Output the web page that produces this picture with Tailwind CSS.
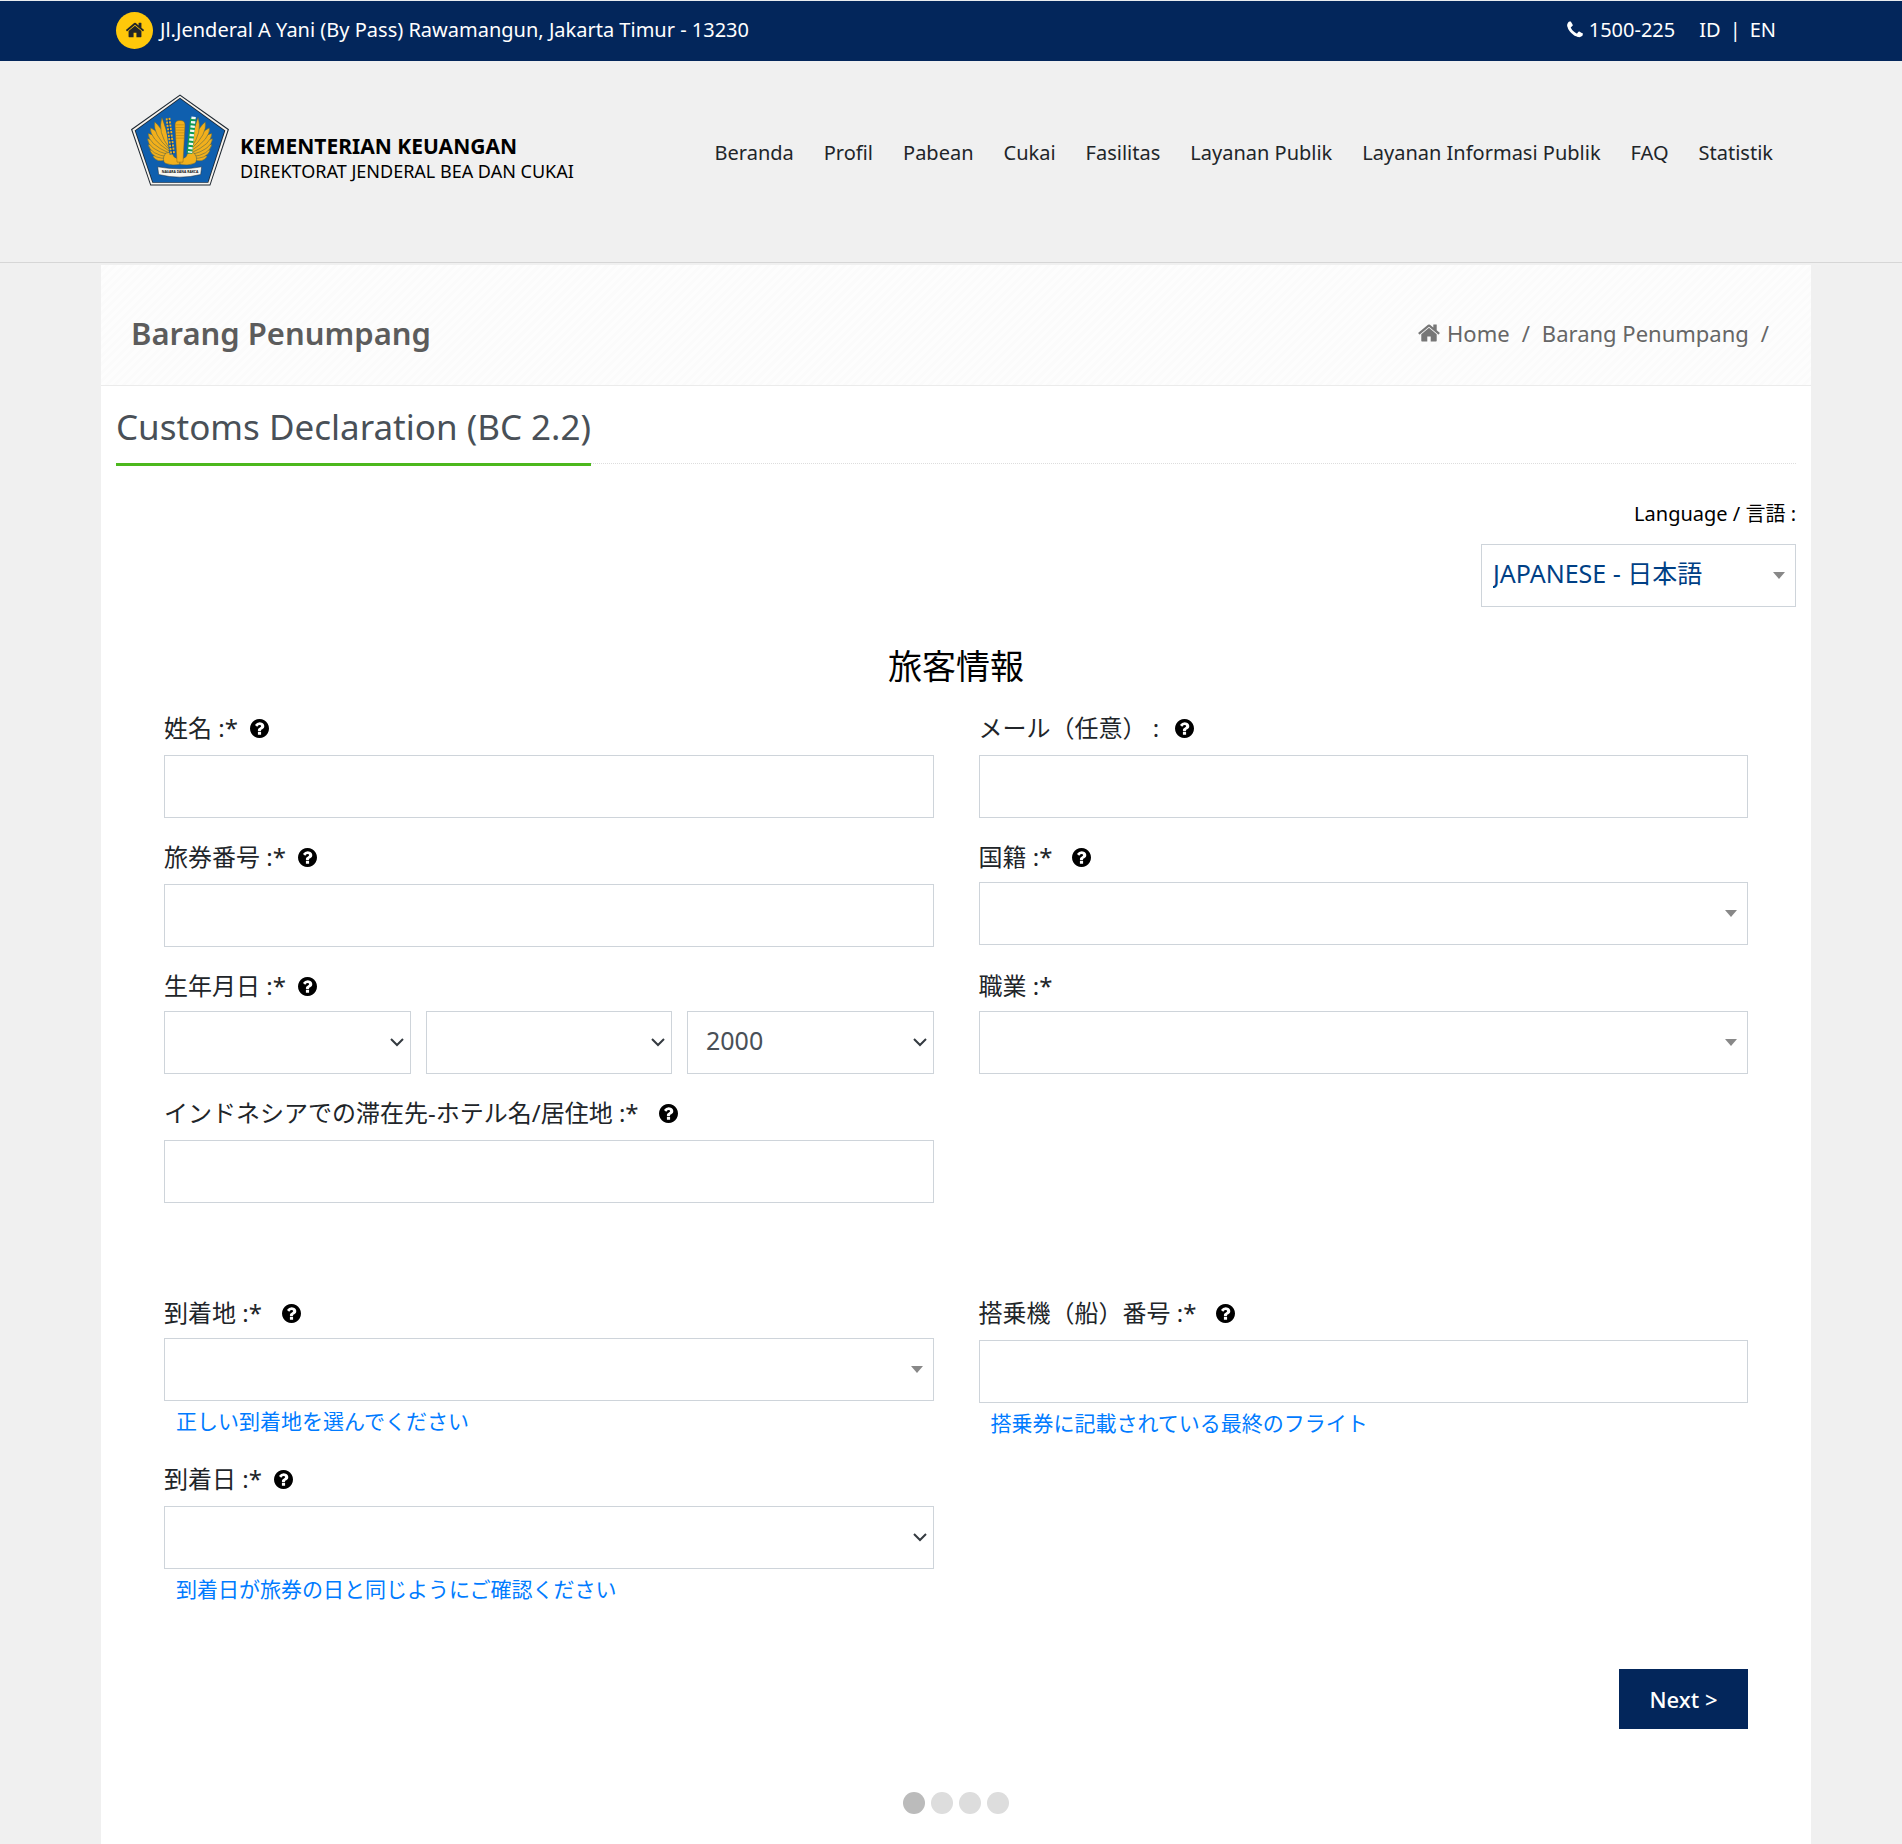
<!DOCTYPE html>
<html lang="ja">
<head>
  <meta charset="UTF-8">
  <meta name="viewport" content="width=device-width, initial-scale=1.0">
  <title>Customs Declaration (BC 2.2)</title>
  <script src="https://cdn.jsdelivr.net/npm/@tailwindcss/browser@4"></script>
</head>
<body class="bg-[#f0f0f0] font-['Noto_Sans','Noto_Sans_CJK_JP',sans-serif] text-[#212529]">

<!-- shared icons -->
<svg class="hidden">
  <symbol id="home" viewBox="0 0 1792 1792"><path d="M1472 992v480q0 26-19 45t-45 19h-384v-384h-256v384h-384q-26 0-45-19t-19-45v-480q0-1 .5-3t.5-3l575-474 575 474q1 2 1 6zm223-69l-62 74q-8 9-21 11h-3q-13 0-21-7l-692-577-692 577q-12 8-24 7-13-2-21-11l-62-74q-8-10-7-23.5t11-21.5l719-599q32-26 76-26t76 26l244 204v-195q0-14 9-23t23-9h192q14 0 23 9t9 23v408l219 182q10 8 11 21.5t-7 23.5z"/></symbol>
  <symbol id="phone" viewBox="0 0 1792 1792"><path d="M1600 1240q0 27-10 70.5t-21 68.5q-21 50-122 106-94 51-186 51-27 0-53-3.5t-57.5-12.5-47-14.5-55.5-20.5-49-18q-98-35-175-83-127-79-264-216t-216-264q-48-77-83-175-3-9-18-49t-20.500-55.500-14.500-47-12.500-57.500-3.500-53q0-92 51-186 56-101 106-122 25-11 68.500-21t70.500-10q14 0 21 3 18 6 53 76 11 19 30 54t35 63.500 31 53.500q3 4 17.500 25t21.500 35.500 7 28.500q0 20-28.500 50t-62 55-62 53-28.500 46q0 9 5 22.500t8.500 20.500 14 24 11.500 19q76 137 174 235t235 174q2 1 19 11.500t24 14 20.500 8.500 22.500 5q18 0 46-28.500t53-62 55-62 50-28.500q14 0 28.500 7t35.500 21.500 25 17.500q25 15 53.500 31t63.500 35 54 30q70 35 76 53 3 7 3 21z"/></symbol>
  <symbol id="help" viewBox="128 128 1536 1536"><path d="M1024 1376v-192q0-14-9-23t-23-9h-192q-14 0-23 9t-9 23v192q0 14 9 23t23 9h192q14 0 23-9t9-23zm256-672q0-88-55.5-163t-138.500-116-170-41q-243 0-371 213-15 24 8 42l132 100q7 6 19 6 16 0 25-12 53-68 86-92 34-24 86-24 48 0 85.500 26t37.500 59q0 38-20 61t-68 45q-63 28-115.500 86.500t-52.500 125.500v36q0 14 9 23t23 9h192q14 0 23-9t9-23q0-19 21.500-49.500t54.500-49.500q32-18 49-28.500t46-35 44.500-48 28-60.500 12.500-81zm384 192q0 209-103 385.500t-279.500 279.500-385.500 103-385.500-103-279.500-279.500-103-385.500 103-385.500 279.500-279.500 385.500-103 385.500 103 279.500 279.500 103 385.500z"/></symbol>
  <symbol id="caret" viewBox="0 0 12 7"><path d="M0 0h12L6 7z"/></symbol>
  <symbol id="chevron" viewBox="0 0 14 9"><path d="M1 1l6 6 6-6" fill="none" stroke="currentColor" stroke-width="2"/></symbol>
</svg>

<div class="bg-[#03265b] border-t border-[#e9ecef] text-white">
  <div class="ml-[116px] mr-[126px] h-[60px] pb-[2px] flex items-center justify-between text-[20px]">
    <div class="flex items-center gap-[7px]">
      <span class="flex items-center justify-center size-[37px] rounded-full bg-[#ffc80a] text-[#212529]"><svg class="size-5 fill-current"><use href="#home"/></svg></span>
      <span>Jl.Jenderal A Yani (By Pass) Rawamangun, Jakarta Timur - 13230</span>
    </div>
    <div class="flex items-center">
      <svg class="size-5 mr-1 fill-current"><use href="#phone"/></svg>
      <span class="mr-6">1500-225</span>
      <a href="#">ID</a><span class="mx-[9px]">|</span><a href="#">EN</a>
    </div>
  </div>
</div>

<header class="border-b border-[#d6d6d6]">
  <div class="ml-[131px] mr-[129px] h-[201px] pt-[33px] flex items-start justify-between">
    <a href="#" class="flex items-end gap-[11px] text-black">
      <svg class="w-[98px] h-[92px]" viewBox="34 28 294 275">
        <path d="M181 29L328 133 272 302H92L34 133z" fill="#1c2630"/>
        <path d="M181 33L324 135 270 299H94L38 135z" fill="#f6f3ee"/>
        <path d="M181 39L317 137 266 294H98L45 137z" fill="#1c2630"/>
        <path d="M181 42L314 138 264 292H100L48 138z" fill="#0f5fae"/>
        <g id="wing" fill="#f2b01c" stroke="#3d5a52" stroke-width="1.500">
          <path d="M142 224Q112 236 99 214Q118 206 146 210z"/>
          <path d="M145 220Q102 224 90 196Q112 194 147 206z"/>
          <path d="M147 216Q92 210 85 178Q108 182 148 200z"/>
          <path d="M148 210Q86 194 83 161Q105 166 149 194z"/>
          <path d="M149 205Q86 178 85 145Q106 150 149 188z"/>
          <path d="M149 199Q90 162 92 129Q112 136 149 182z"/>
          <path d="M149 194Q98 148 105 111Q124 126 149 176z"/>
          <path d="M149 190Q112 142 127 97Q138 128 149 170z"/>
          <path d="M138 205Q124 225 138 236Q160 244 181 238V222Q160 220 160 208Q150 198 138 205z"/>
        </g>
        <use href="#wing" transform="translate(362 0) scale(-1 1)"/>
        <path d="M145 100L160 208" stroke="#0f5fae" stroke-width="20" fill="none"/>
        <path d="M145 100L159 208" stroke="#f2b01c" stroke-width="14" stroke-dasharray="6 4" fill="none"/>
        <path d="M145 100L159 208" stroke="#0b3f78" stroke-width="3" fill="none"/>
        <path d="M220 100L209 206" stroke="#0c9a55" stroke-width="17" fill="none"/>
        <path d="M222 96L211 204" stroke="#f4f8f4" stroke-width="13" stroke-dasharray="7 6" fill="none"/>
        <path d="M166 120Q166 107 181 107Q196 107 196 120L190 232H172z" fill="#f2b01c" stroke="#80601a" stroke-width="1.500"/>
        <path d="M167 120h28M167 128h28M168 136h26M168 144h26M169 152h24M169 160h24" stroke="#a97a16" stroke-width="1.500"/>
        <path d="M114 246Q181 258 246 246L243 269Q181 285 117 269z" fill="#f7f7f2" stroke="#1c2630" stroke-width="1.500"/>
        <text x="181" y="266" text-anchor="middle" font-size="10" font-weight="bold" fill="#111">NAGARA DANA RAKCA</text>
      </svg>
      <span class="flex flex-col pb-[2px] leading-[25px]">
        <span class="text-[21px] font-bold">KEMENTERIAN KEUANGAN</span>
        <span class="text-[18px]">DIREKTORAT JENDERAL BEA DAN CUKAI</span>
      </span>
    </a>
    <nav class="flex gap-[30px] pt-[43px] text-[20px] leading-8">
      <a href="#">Beranda</a>
      <a href="#">Profil</a>
      <a href="#">Pabean</a>
      <a href="#">Cukai</a>
      <a href="#">Fasilitas</a>
      <a href="#">Layanan Publik</a>
      <a href="#">Layanan Informasi Publik</a>
      <a href="#">FAQ</a>
      <a href="#">Statistik</a>
    </nav>
  </div>
</header>

<main class="ml-[101px] mr-[91px] mt-[2px] bg-white">
  <div class="h-[121px] pl-[30px] pr-[42px] flex items-center justify-between pt-4 border-b border-[#ebebeb] bg-[repeating-linear-gradient(135deg,#fdfdfd_0_3px,#fbfbfb_3px_6px)]">
    <h1 class="text-[31px] font-semibold text-[#5c5c5c]">Barang Penumpang</h1>
    <div class="flex items-center text-[22px] text-[#666]">
      <svg class="size-6 mr-[6px] fill-[#777]"><use href="#home"/></svg>
      <a href="#">Home</a><span class="mx-3">/</span><a href="#">Barang Penumpang</a><span class="ml-3">/</span>
    </div>
  </div>

  <div class="px-[15px]">
    <div class="border-b border-dotted border-[#ddd] flex">
      <h2 class="h-[80px] pt-[17px] -mb-[3px] border-b-[3px] border-[#4cb81d] text-[35px] leading-[48px] text-[#495057]">Customs Declaration (BC 2.2)</h2>
    </div>

    <div class="mt-[30px] flex flex-col items-end">
      <label for="lang" class="text-[20px] leading-10 text-black">Language / 言語 :</label>
      <div class="relative mt-[10px] w-[315px]">
        <select id="lang" class="appearance-none w-full h-[63px] pl-[11px] pb-1 border border-[#ced4da] bg-white text-[25px] text-[#004085]"><option>JAPANESE - 日本語</option></select>
        <svg class="absolute right-[11px] top-7 w-3 h-[7px] fill-[#888]"><use href="#caret"/></svg>
      </div>
    </div>
  </div>

  <form class="px-[63px] pb-[30px]">
    <h3 class="mt-[34px] mb-[17px] text-center text-[34px] leading-[50px] text-black">旅客情報</h3>

    <div class="grid grid-cols-2 gap-x-[45px] gap-y-[19px]">
      <div>
        <label for="name" class="flex items-center h-10 text-[24px]">姓名 :*<svg class="size-[19px] ml-3 fill-black"><use href="#help"/></svg></label>
        <input id="name" type="text" class="block mt-[7px] w-full h-[63px] px-4 border border-[#ced4da]">
      </div>
      <div>
        <label for="email" class="flex items-center h-10 text-[24px]">メール（任意） :<svg class="size-[19px] ml-4 fill-black"><use href="#help"/></svg></label>
        <input id="email" type="email" class="block mt-[7px] w-full h-[63px] px-4 border border-[#ced4da]">
      </div>
      <div>
        <label for="passport" class="flex items-center h-10 text-[24px]">旅券番号 :*<svg class="size-[19px] ml-3 fill-black"><use href="#help"/></svg></label>
        <input id="passport" type="text" class="block mt-[7px] w-full h-[63px] px-4 border border-[#ced4da]">
      </div>
      <div>
        <label for="nationality" class="flex items-center h-10 text-[24px]">国籍 :*<svg class="size-[19px] ml-5 fill-black"><use href="#help"/></svg></label>
        <div class="relative mt-[5px]">
          <select id="nationality" class="appearance-none block w-full h-[63px] px-4 border border-[#ced4da] bg-white text-[25px]"><option></option></select>
          <svg class="absolute right-[11px] top-7 w-3 h-[7px] fill-[#888]"><use href="#caret"/></svg>
        </div>
      </div>
      <div>
        <label for="day" class="flex items-center h-10 text-[24px]">生年月日 :*<svg class="size-[19px] ml-3 fill-black"><use href="#help"/></svg></label>
        <div class="grid grid-cols-3 gap-x-[15px] mt-[5px]">
          <div class="relative">
            <select id="day" aria-label="日" class="appearance-none block w-full h-[63px] px-[18px] border border-[#ced4da] bg-white text-[25px]"><option></option></select>
            <svg class="absolute right-[7px] top-[27px] w-[14px] h-[9px] text-[#343a40]"><use href="#chevron"/></svg>
          </div>
          <div class="relative">
            <select id="month" aria-label="月" class="appearance-none block w-full h-[63px] px-[18px] border border-[#ced4da] bg-white text-[25px]"><option></option></select>
            <svg class="absolute right-[7px] top-[27px] w-[14px] h-[9px] text-[#343a40]"><use href="#chevron"/></svg>
          </div>
          <div class="relative">
            <select id="year" aria-label="年" class="appearance-none block w-full h-[63px] px-[18px] pb-1 border border-[#ced4da] bg-white text-[25px] text-[#495057]"><option>2000</option></select>
            <svg class="absolute right-[7px] top-[27px] w-[14px] h-[9px] text-[#343a40]"><use href="#chevron"/></svg>
          </div>
        </div>
      </div>
      <div>
        <label for="job" class="flex items-center h-10 text-[24px]">職業 :*</label>
        <div class="relative mt-[5px]">
          <select id="job" class="appearance-none block w-full h-[63px] px-4 border border-[#ced4da] bg-white text-[25px]"><option></option></select>
          <svg class="absolute right-[11px] top-7 w-3 h-[7px] fill-[#888]"><use href="#caret"/></svg>
        </div>
      </div>
      <div>
        <label for="address" class="flex items-center h-10 text-[24px]">インドネシアでの滞在先-ホテル名/居住地 :*<svg class="size-[19px] ml-5 fill-black"><use href="#help"/></svg></label>
        <input id="address" type="text" class="block mt-[7px] w-full h-[63px] px-4 border border-[#ced4da]">
      </div>
    </div>

    <div class="grid grid-cols-2 gap-x-[45px] gap-y-4 mt-[90px]">
      <div>
        <label for="place" class="flex items-center h-10 text-[24px]">到着地 :*<svg class="size-[19px] ml-5 fill-black"><use href="#help"/></svg></label>
        <div class="relative mt-[5px]">
          <select id="place" class="appearance-none block w-full h-[63px] px-4 border border-[#ced4da] bg-white text-[25px]"><option></option></select>
          <svg class="absolute right-[11px] top-7 w-3 h-[7px] fill-[#888]"><use href="#caret"/></svg>
        </div>
        <p class="pl-3 text-[21px] leading-10 text-[#007bff]">正しい到着地を選んでください</p>
      </div>
      <div>
        <label for="flight" class="flex items-center h-10 text-[24px]">搭乗機（船）番号 :*<svg class="size-[19px] ml-5 fill-black"><use href="#help"/></svg></label>
        <input id="flight" type="text" class="block mt-[7px] w-full h-[63px] px-4 border border-[#ced4da]">
        <p class="pl-3 text-[21px] leading-10 text-[#007bff]">搭乗券に記載されている最終のフライト</p>
      </div>
      <div>
        <label for="date" class="flex items-center h-10 text-[24px]">到着日 :*<svg class="size-[19px] ml-3 fill-black"><use href="#help"/></svg></label>
        <div class="relative mt-[7px]">
          <select id="date" class="appearance-none block w-full h-[63px] px-4 border border-[#ced4da] bg-white text-[25px]"><option></option></select>
          <svg class="absolute right-[7px] top-[27px] w-[14px] h-[9px] text-[#343a40]"><use href="#chevron"/></svg>
        </div>
        <p class="pl-3 text-[21px] leading-10 text-[#007bff]">到着日が旅券の日と同じようにご確認ください</p>
      </div>
    </div>

    <div class="flex justify-end mt-[60px]">
      <button type="button" class="w-[129px] h-[60px] bg-[#03265b] text-white text-[22px] font-medium">Next &gt;</button>
    </div>

    <!-- step dots -->
    <div class="flex justify-center gap-[6px] mt-[63px]">
      <span class="size-[22px] rounded-full bg-[#bbb]"></span>
      <span class="size-[22px] rounded-full bg-[#ddd]"></span>
      <span class="size-[22px] rounded-full bg-[#ddd]"></span>
      <span class="size-[22px] rounded-full bg-[#ddd]"></span>
    </div>
  </form>
</main>
</body>
</html>
